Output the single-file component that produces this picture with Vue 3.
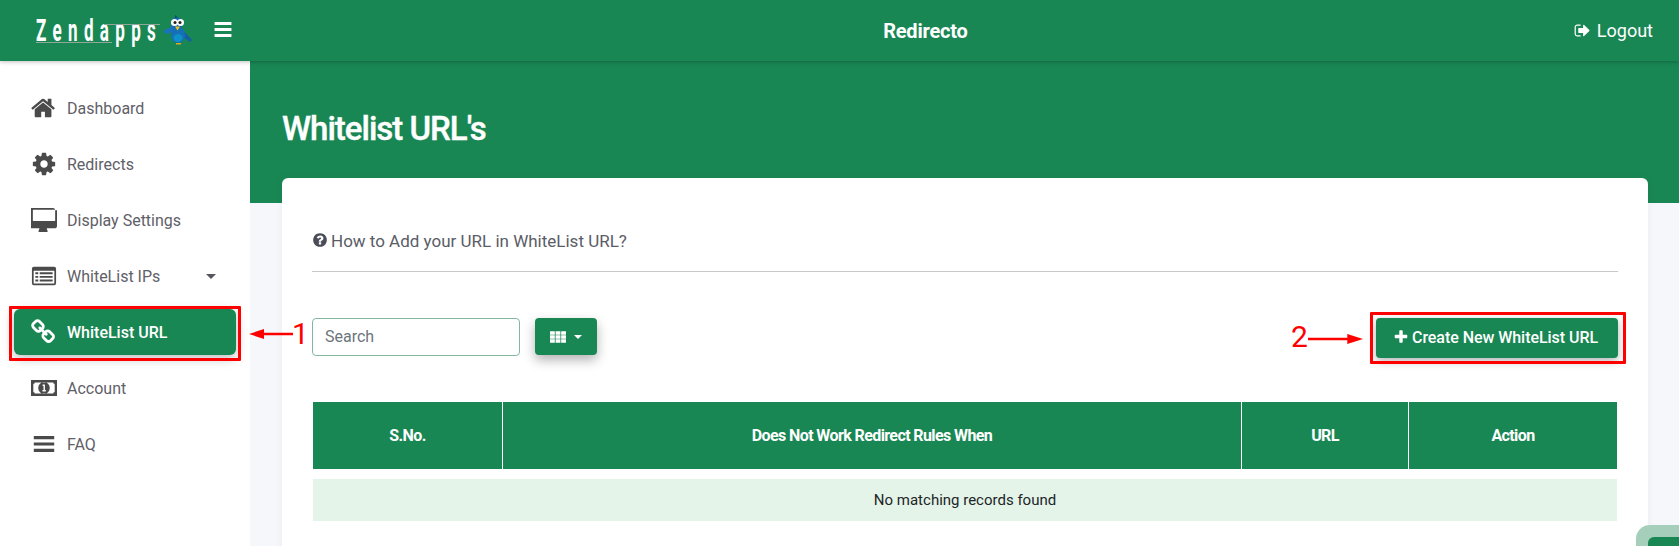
<script setup>
const menu = [
  { label: 'Dashboard', icon: 'home' },
  { label: 'Redirects', icon: 'cog' },
  { label: 'Display Settings', icon: 'desktop' },
  { label: 'WhiteList IPs', icon: 'list', caret: true },
  { label: 'WhiteList URL', icon: 'link', active: true },
  { label: 'Account', icon: 'money' },
  { label: 'FAQ', icon: 'bars' },
]
const columns = ['S.No.', 'Does Not Work Redirect Rules When', 'URL', 'Action']
const paths = {
  home: 'M1408 992v480q0 26-19 45t-45 19h-384v-384h-256v384h-384q-26 0-45-19t-19-45v-480q0-1 .5-3t.5-3l575-474 575 474q1 2 1 6zm223-69l-62 74q-8 9-21 11h-3q-13 0-21-7l-692-577-692 577q-12 8-24 7-13-2-21-11l-62-74q-8-10-7-23.5t11-21.5l719-599q32-26 76-26t76 26l244 204v-195q0-14 9-23t23-9h192q14 0 23 9t9 23v408l219 182q10 8 11 21.5t-7 23.5z',
  cog: 'M1152 896q0-106-75-181t-181-75-181 75-75 181 75 181 181 75 181-75 75-181zm512-109v222q0 12-8 23t-20 13l-185 28q-19 54-39 91 35 50 107 138 10 12 10 25t-9 23q-27 37-99 108t-94 71q-12 0-26-9l-138-108q-44 23-91 38-16 136-29 186-7 28-36 28h-222q-14 0-24.5-8.5t-11.5-21.5l-28-184q-49-16-90-37l-141 107q-10 9-25 9-14 0-25-11-126-114-165-168-7-10-7-23 0-12 8-23 15-21 51-66.5t54-70.5q-27-50-41-99l-183-27q-13-2-21-12.5t-8-23.5v-222q0-12 8-23t19-13l186-28q14-46 39-92-40-57-107-138-10-12-10-24 0-10 9-23 26-36 98.5-107.5t94.5-71.5q13 0 26 10l138 107q44-23 91-38 16-136 29-186 7-28 36-28h222q14 0 24.5 8.5t11.5 21.5l28 184q49 16 90 37l142-107q9-9 24-9 13 0 25 10 129 119 165 170 7 8 7 22 0 12-8 23-15 21-51 66.5t-54 70.5q26 50 41 98l183 28q13 2 21 12.5t8 23.5z',
  desktop: 'M1664 928v-704q0-13-9.5-22.5t-22.5-9.5h-1472q-13 0-22.5 9.5t-9.5 22.5v704q0 13 9.5 22.5t22.5 9.5h1472q13 0 22.5-9.5t9.5-22.5zm128-704v1088q0 66-47 113t-113 47h-544q0 37 16 77.5t32 71 16 43.5q0 26-19 45t-45 19h-512q-26 0-45-19t-19-45q0-14 16-44t32-70 16-78h-544q-66 0-113-47t-47-113v-1088q0-66 47-113t113-47h1472q66 0 113 47t47 113z',
  link: 'M1456 1216q0-40-28-68l-208-208q-28-28-68-28-42 0-72 32 3 3 19 18.5t21.5 21.5 15 19 13 25.5 3.5 27.5q0 40-28 68t-68 28q-15 0-27.5-3.5t-25.5-13-19-15-21.5-21.5-18.5-19q-33 31-33 73 0 40 28 68l206 207q27 27 68 27 40 0 68-26l147-146q28-28 28-67zm-703-705q0-40-28-68l-206-207q-28-28-68-28-39 0-68 27l-147 146q-28 28-28 67 0 40 28 68l208 208q27 27 68 27 42 0 72-31-3-3-19-18.5t-21.5-21.5-15-19-13-25.5-3.5-27.5q0-40 28-68t68-28q15 0 27.5 3.5t25.5 13 19 15 21.5 21.5 18.5 19q33-31 33-73zm895 705q0 120-85 203l-147 146q-83 83-203 83-121 0-204-85l-206-207q-83-83-83-203 0-123 88-209l-88-88q-86 88-208 88-120 0-204-84l-208-208q-84-84-84-204t85-203l147-146q83-83 203-83 121 0 204 85l206 207q83 83 83 203 0 123-88 209l88 88q86-88 208-88 120 0 204 84l208 208q84 84 84 204z',
  list: 'M200 256h1392q136 0 136 136v1008q0 136-136 136H200q-136 0-136-136V392q0-136 136-136zm-16 270v874q0 16 16 16h1392q16 0 16-16V526zM300 640h200v130H300zm0 250h200v130H300zm0 250h200v130H300zM600 640h890v130H600zm0 250h890v130H600zm0 250h890v130H600z',
  money: 'M0 352h1792v1088H0zM260 1280h1272q0-90 100-110V620q-100-20-100-110H260q0 90-100 110v550q100 20 100 110zM896 480a400 416 0 1 1 0 832a400 416 0 1 1 0-832zM800 660v90h60v290h-70v90h230v-90h-60V660z',
  bars: 'M192 352h1408v210H192zM192 790h1408v210H192zM192 1230h1408v210H192z',
  question: 'M1024 1376v-192q0-14-9-23t-23-9h-192q-14 0-23 9t-9 23v192q0 14 9 23t23 9h192q14 0 23-9t9-23zm256-672q0-88-55.5-163t-138.5-116-170-41q-243 0-371 213-15 24 8 42l132 100q7 6 19 6 16 0 25-12 53-68 86-92 34-24 86-24 48 0 85.5 26t37.5 59q0 38-20 61t-68 45q-63 28-115.5 86.5t-52.5 125.5v36q0 14 9 23t23 9h192q14 0 23-9t9-23q0-19 21.5-49.5t54.5-49.5q32-18 49-28.5t46-35 44.5-48 28-60.5 12.5-81zm384 192q0 209-103 385.5t-279.5 279.5-385.5 103-385.5-103-279.5-279.5-103-385.5 103-385.5 279.5-279.5 385.5-103 385.5 103 279.5 279.5 103 385.5z',
  logout: 'M704 1440q0 4 1 20t.5 26.5-3 23.5-10 19.5-20.5 6.5h-320q-119 0-203.5-84.5t-84.5-203.5v-704q0-119 84.5-203.5t203.5-84.5h320q13 0 22.5 9.5t9.5 22.5q0 4 1 20t.5 26.5-3 23.5-10 19.5-20.5 6.5h-320q-66 0-113 47t-47 113v704q0 66 47 113t113 47h312l11.5 1 11.5 3 8 5.5 7 9 2 13.5zm928-544q0 26-19 45l-544 544q-19 19-45 19t-45-19-19-45v-288h-448q-26 0-45-19t-19-45v-384q0-26 19-45t45-19h448v-288q0-26 19-45t45-19 45 19l544 544q19 19 19 45z',
  plus: 'M1600 736v192q0 40-28 68t-68 28h-416v416q0 40-28 68t-68 28h-192q-40 0-68-28t-28-68v-416h-416q-40 0-68-28t-28-68v-192q0-40 28-68t68-28h416v-416q0-40 28-68t68-28h192q40 0 68 28t28 68v416h416q40 0 68 28t28 68z',
  th: 'M100 320h480v340H100zM656 320h480v340H656zM1212 320h480v340h-480zM100 726h480v340H100zM656 726h480v340H656zM1212 726h480v340h-480zM100 1132h480v340H100zM656 1132h480v340H656zM1212 1132h480v340h-480z',
}
</script>

<template>
  <div class="page">
    <header class="topbar">
      <div class="brand">
        <span class="logo-wrap">
          <span class="logo">Zendapps</span>
          <i class="logo-under"></i>
          <i class="logo-over"></i>
        </span>
        <svg class="bird" viewBox="0 0 29 30">
          <path d="M12 0l3 3 2 2-5 1z" fill="#0b3f78" />
          <ellipse cx="14" cy="8.500" rx="6" ry="6" fill="#1565b0" />
          <path d="M0 16l10-5 2 5-9 3z" fill="#1a72bd" />
          <path d="M18 13l11 12-2 2-12-9z" fill="#125fa8" />
          <ellipse cx="15" cy="20" rx="7" ry="8" fill="#1570b8" />
          <ellipse cx="15" cy="23" rx="4.500" ry="4" fill="#0e90c8" />
          <circle cx="11.500" cy="7.500" r="3.500" fill="#fff" />
          <circle cx="17.500" cy="7.500" r="3.500" fill="#fff" />
          <circle cx="12" cy="7.500" r="1.500" fill="#222" />
          <circle cx="17" cy="7.500" r="1.500" fill="#222" />
          <path d="M12 11.500h5l-2.500 4z" fill="#f2c21a" />
          <path d="M13 28h5v1.500h-5z" fill="#e0a51c" />
        </svg>
        <svg class="burger" viewBox="0 0 18 16"><path d="M0 0h18v3.200H0zM0 6.400h18v3.200H0zM0 12.800h18V16H0z" fill="#fff" /></svg>
      </div>
      <div class="app-title">Redirecto</div>
      <div class="logout">
        <svg class="logout-icon" viewBox="0 0 1792 1792"><path :d="paths.logout" fill="#fff" /></svg>
        <span>Logout</span>
      </div>
    </header>

    <div class="body-row">
      <aside class="sidebar">
        <div v-for="item in menu" :key="item.label" class="nav-item" :class="{ active: item.active }">
          <svg class="nav-icon" viewBox="0 0 1792 1792"><path :d="paths[item.icon]" fill-rule="evenodd" /></svg>
          <span class="nav-label">{{ item.label }}</span>
          <span v-if="item.caret" class="nav-caret"></span>
        </div>
      </aside>

      <main class="content">
        <div class="hero"><h1>Whitelist URL's</h1></div>
        <section class="card">
          <div class="howto">
            <svg class="q-icon" viewBox="0 0 1792 1792"><path :d="paths.question" /></svg>
            <span>How to Add your URL in WhiteList URL?</span>
          </div>
          <div class="toolbar">
            <div class="search">Search</div>
            <button class="columns-btn">
              <svg class="th-icon" viewBox="0 0 1792 1792"><path :d="paths.th" fill="#fff" /></svg>
              <span class="btn-caret"></span>
            </button>
            <button class="create-btn">
              <svg class="plus-icon" viewBox="0 0 1792 1792"><path :d="paths.plus" fill="#fff" /></svg>
              <span>Create New WhiteList URL</span>
            </button>
          </div>
          <div class="table-head">
            <div v-for="c in columns" :key="c" class="th">{{ c }}</div>
          </div>
          <div class="empty-row">No matching records found</div>
        </section>
      </main>
    </div>

    <div class="mark mark-one"></div>
    <div class="mark mark-two"></div>
    <svg class="arrow arrow-one" viewBox="0 0 44 12"><path d="M0 6l15-5v3.800h29v2.400H15V11z" fill="#f00" /></svg>
    <svg class="arrow arrow-two" viewBox="0 0 56 12"><path d="M56 6l-16-5v3.800H0v2.400h40V11z" fill="#f00" /></svg>
    <span class="num num-one">1</span>
    <span class="num num-two">2</span>
    <div class="chat"><div class="chat-inner"></div></div>
  </div>
</template>

<style>
html, body { margin: 0; background: #fff; }
</style>

<style scoped>
.page {
  position: relative;
  width: 1679px;
  height: 546px;
  overflow: hidden;
  font-family: Roboto, "Liberation Sans", sans-serif;
  background: #f6f7fb;
}
.topbar {
  position: relative;
  z-index: 2;
  height: 61px;
  display: grid;
  grid-template-columns: 250px 1fr auto;
  align-items: center;
  padding-right: 26px;
  background: #198754;
  color: #fff;
  box-shadow: 0 1px 4px rgba(0, 0, 0, .25);
}
.brand {
  display: flex;
  align-items: center;
  padding-left: 36px;
}
.logo-wrap {
  position: relative;
  display: block;
  width: 127px;
  height: 40px;
  flex: none;
}
.logo {
  position: absolute;
  left: 0;
  top: 2px;
  font-size: 31px;
  font-weight: 700;
  letter-spacing: 11.500px;
  line-height: 36px;
  white-space: nowrap;
  transform: scaleX(.55);
  transform-origin: left center;
  color: #fff;
}
.logo-under, .logo-over {
  position: absolute;
  height: 1px;
  background: #8fa89b;
}
.logo-under { left: 0; top: 31px; width: 76px; }
.logo-over { left: 68px; top: 13px; width: 56px; }
.bird { width: 29px; height: 30px; flex: none; margin-top: -2px; }
.burger { width: 18px; height: 15px; margin-left: 22px; flex: none; margin-top: -2px; }
.app-title {
  padding-left: 27px;
  text-align: center;
  font-size: 20px;
  font-weight: 700;
  letter-spacing: -.2px;
}
.logout {
  display: flex;
  align-items: center;
  font-size: 18px;
  gap: 6px;
}
.logout-icon { width: 17px; height: 17px; }
.body-row { display: flex; height: 485px; }
.sidebar {
  width: 250px;
  flex: none;
  box-sizing: border-box;
  padding: 24px 14px 0 14px;
  background: #fff;
  display: flex;
  flex-direction: column;
  gap: 10px;
}
.nav-item {
  height: 46px;
  display: flex;
  align-items: center;
  padding: 0 20px 0 17px;
  border-radius: 6px;
  color: #5f6068;
  fill: #4a4a4a;
  font-size: 16px;
}
.nav-item.active {
  background: #198754;
  color: #fff;
  fill: #fff;
  font-weight: 500;
  box-shadow: 0 3px 12px rgba(0, 0, 0, .28);
}
.nav-icon { width: 26px; height: 26px; margin-right: 10px; flex: none; }
.nav-label { flex: none; }
.nav-caret {
  margin-left: auto;
  width: 0;
  height: 0;
  border-left: 5px solid transparent;
  border-right: 5px solid transparent;
  border-top: 5px solid #55565e;
}
.content { flex: 1; min-width: 0; position: relative; }
.hero {
  height: 142px;
  box-sizing: border-box;
  padding: 48px 32px 0;
  background: #198754;
}
.hero h1 {
  margin: 0;
  color: #fff;
  font-size: 33px;
  line-height: 40px;
  font-weight: 500;
  letter-spacing: -1px;
  -webkit-text-stroke: .4px #fff;
}
.card {
  margin: -25px 31px 0 32px;
  height: 400px;
  box-sizing: border-box;
  padding: 0 30px;
  background: #fff;
  border-radius: 6px;
  box-shadow: 0 0 8px rgba(0, 0, 0, .05);
  position: relative;
}
.howto {
  height: 94px;
  box-sizing: border-box;
  padding-top: 51px;
  border-bottom: 1px solid #c8c8c8;
  display: flex;
  align-items: flex-start;
  gap: 3px;
  color: #5a5c66;
  font-size: 17px;
  line-height: 24px;
}
.q-icon { width: 16px; height: 16px; fill: #4a4d57; margin-top: 3px; }
.toolbar {
  display: flex;
  align-items: flex-start;
  margin-top: 46px;
  height: 84px;
}
.search {
  width: 208px;
  height: 38px;
  box-sizing: border-box;
  padding: 0 12px;
  border: 1px solid #83b8a0;
  border-radius: 4px;
  color: #6c757d;
  font-size: 16px;
  line-height: 36px;
}
.columns-btn {
  margin-left: 15px;
  width: 62px;
  height: 37px;
  padding: 0 2px 0 0;
  border: none;
  border-radius: 4px;
  background: #198754;
  box-shadow: 0 5px 12px rgba(0, 0, 0, .3);
  display: flex;
  align-items: center;
  justify-content: center;
  gap: 7px;
}
.th-icon { width: 18px; height: 18px; }
.btn-caret {
  width: 0;
  height: 0;
  border-left: 4px solid transparent;
  border-right: 4px solid transparent;
  border-top: 4px solid #fff;
}
.create-btn {
  margin-left: auto;
  width: 242px;
  height: 40px;
  padding: 0 3px 2px 0;
  border: none;
  border-radius: 4px;
  background: #198754;
  color: #fff;
  font: 500 16px Roboto, sans-serif;
  letter-spacing: -.05px;
  box-shadow: 0 3px 10px rgba(0, 0, 0, .3);
  display: flex;
  align-items: center;
  justify-content: center;
  gap: 3px;
}
.plus-icon { width: 16px; height: 16px; }
.table-head {
  display: grid;
  grid-template-columns: 189px 739px 167px 1fr;
  margin: 0 1px;
  height: 67px;
  background: #198754;
}
.th {
  display: flex;
  align-items: center;
  justify-content: center;
  padding-bottom: 1px;
  color: #fff;
  font-size: 16px;
  font-weight: 700;
  letter-spacing: -.6px;
  border-left: 1px solid #fff;
}
.th:first-child { border-left: none; }
.empty-row {
  margin: 10px 1px 0;
  height: 42px;
  background: #e4f4e8;
  color: #212529;
  font-size: 15px;
  line-height: 42px;
  text-align: center;
}
.mark {
  position: absolute;
  box-sizing: border-box;
  border: 3px solid #f00;
  border-radius: 1px;
  z-index: 3;
}
.mark-one { left: 9px; top: 306px; width: 232px; height: 55px; }
.mark-two { left: 1370px; top: 312px; width: 256px; height: 52px; }
.arrow { position: absolute; z-index: 3; }
.arrow-one { left: 249px; top: 328px; width: 44px; height: 12px; }
.arrow-two { left: 1308px; top: 333px; width: 55px; height: 12px; }
.num {
  position: absolute;
  z-index: 3;
  color: #f00;
  font-family: Roboto, sans-serif;
  font-weight: 400;
  font-size: 30px;
  line-height: 30px;
}
.num-one { left: 292px; top: 319px; }
.num-two { left: 1291px; top: 322px; }
.chat {
  position: absolute;
  left: 1636px;
  top: 525px;
  width: 70px;
  height: 50px;
  box-sizing: border-box;
  padding: 12px;
  background: #a5cfba;
  border-radius: 14px;
  z-index: 4;
}
.chat-inner {
  height: 100%;
  background: #198754;
  border-radius: 6px;
}
</style>
